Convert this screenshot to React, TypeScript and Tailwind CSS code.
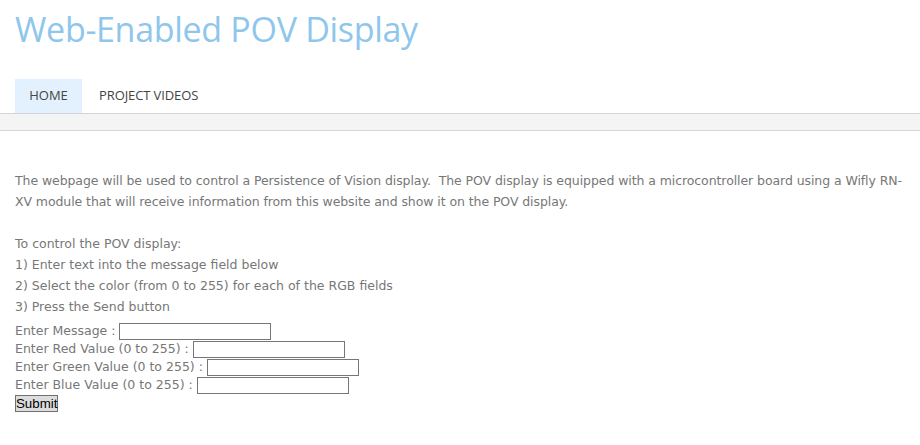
const STEPS = [
  "1) Enter text into the message field below",
  "2) Select the color (from 0 to 255) for each of the RGB fields",
  "3) Press the Send button",
];

const FIELDS = [
  "Enter Message : ",
  "Enter Red Value (0 to 255) : ",
  "Enter Green Value (0 to 255) : ",
  "Enter Blue Value (0 to 255) : ",
];

export default function App() {
  return (
    <div className="min-h-[445px] bg-white">
      <header className="px-[15px] pt-[6px]">
        <h1 className="font-['Open_Sans',sans-serif] text-[34px] leading-[46px] tracking-[-0.3px] text-[#8fc6eb]">
          Web-Enabled POV Display
        </h1>
        <nav className="mt-[27px] flex font-['Open_Sans',sans-serif] text-[13px] text-[#444]">
          <a className="h-[34px] w-[67px] bg-[#e2f1fd] flex items-center justify-center">HOME</a>
          <a className="h-[34px] px-[17px] flex items-center tracking-[-0.1px]">PROJECT VIDEOS</a>
        </nav>
      </header>
      <div className="h-[18px] border-y border-[#d4d4d4] bg-[#f4f4f4]" />
      <main className="px-[15px] pt-[39px] font-['DejaVu_Sans',sans-serif] text-[12.5px] text-[#777]">
        <p className="leading-[21px] w-[892px] tracking-[-0.08px]">
          The webpage will be used to control a Persistence of Vision display.&nbsp; The POV display is equipped
          with a microcontroller board using a Wifly RN-<wbr />XV module that will receive information from this
          website and show it on the POV display.
        </p>
        <div className="mt-[21px] leading-[21px]">
          <p>To control the POV display:</p>
          {STEPS.map((s) => (
            <p key={s}>{s}</p>
          ))}
        </div>
        <form className="mt-[5px] leading-[18px]" onSubmit={(e) => e.preventDefault()}>
          {FIELDS.map((f) => (
            <div key={f} className="h-[18px] flex items-center">
              <span className="whitespace-pre">{f}</span>
              <input
                type="text"
                className="h-[17px] w-[152px] border border-[#767676] bg-white"
              />
            </div>
          ))}
          <button
            type="submit"
            className="mt-px h-[17px] border border-[#707070] bg-[#dddddd] font-['Liberation_Sans',sans-serif] text-[13.3px] leading-[15px] text-black"
          >
            Submit
          </button>
        </form>
      </main>
    </div>
  );
}
